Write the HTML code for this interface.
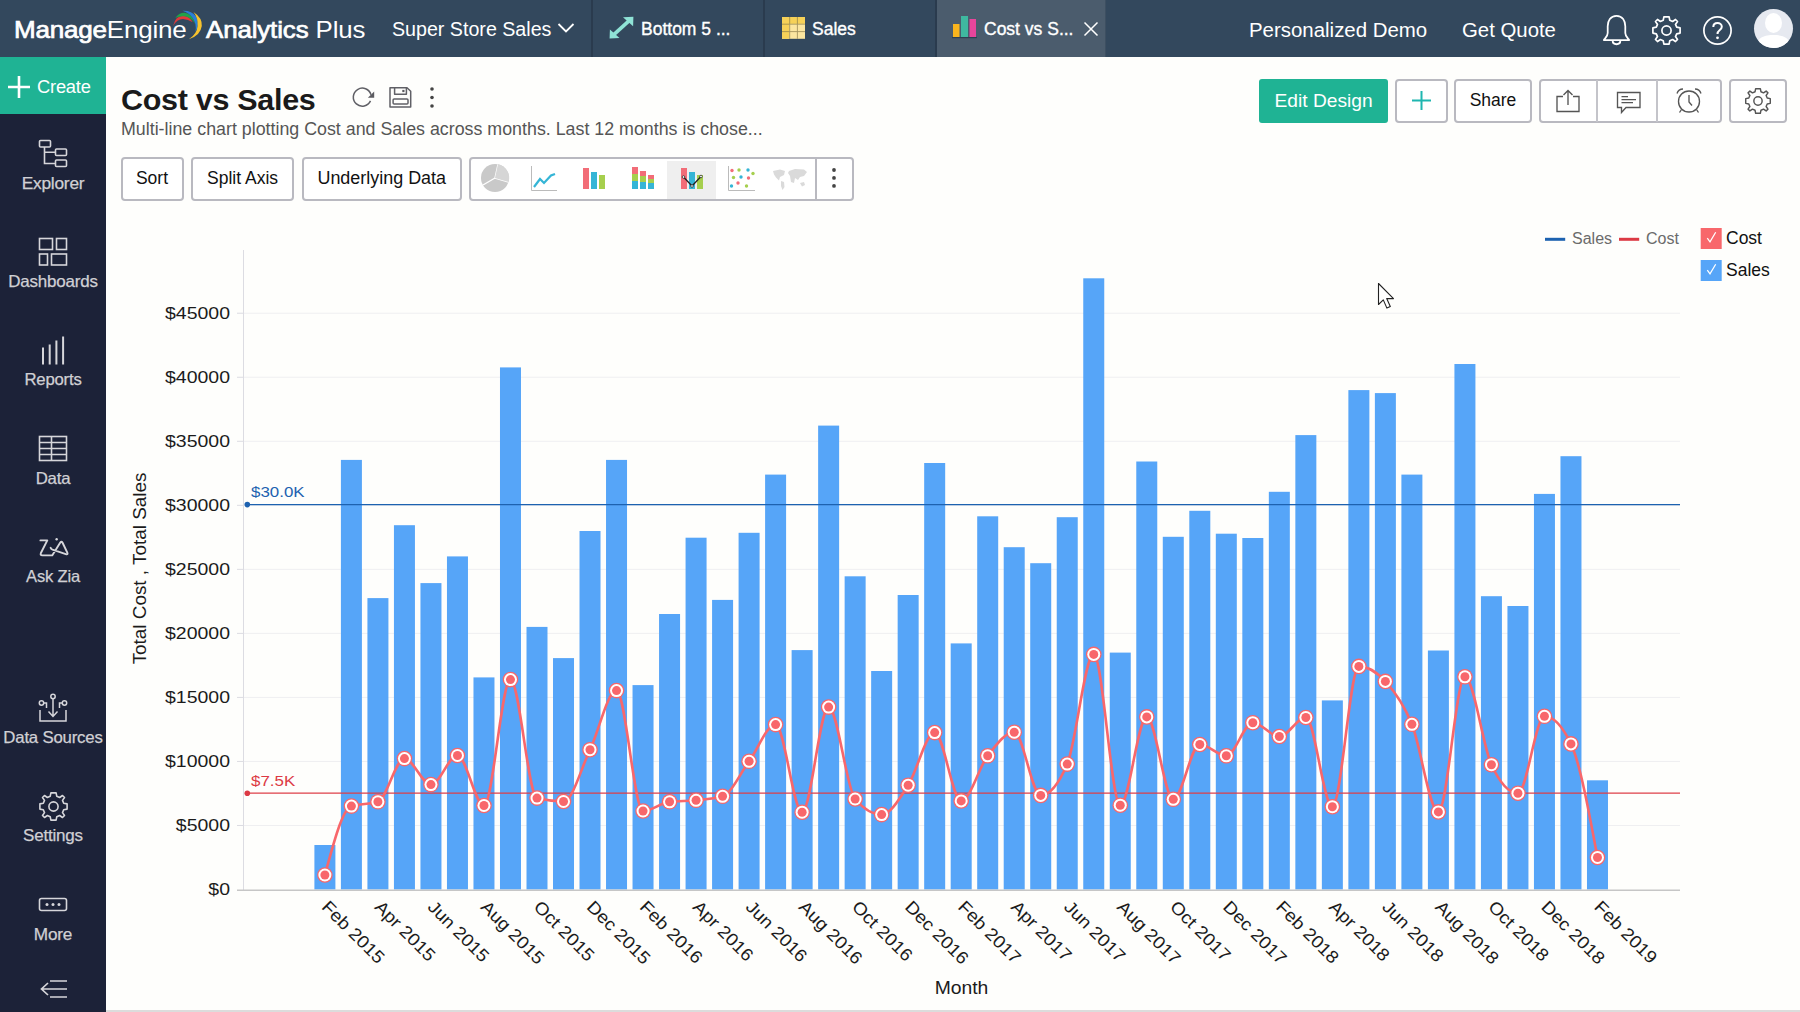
<!DOCTYPE html>
<html>
<head>
<meta charset="utf-8">
<title>Cost vs Sales - Analytics Plus</title>
<style>
*{box-sizing:border-box;margin:0;padding:0}
html,body{width:1800px;height:1012px;overflow:hidden;background:#fefefc;font-family:"Liberation Sans",sans-serif;}
body{position:relative}
.abs{position:absolute}
#topbar{position:absolute;left:0;top:0;width:1800px;height:57.300px;background:#33485d;}
#topbar .t{position:absolute;color:#fff;white-space:nowrap;}
#sidebar{position:absolute;left:0;top:57px;width:106px;height:955px;background:#1c2238;}
#create{position:absolute;left:0;top:0;width:106px;height:57px;background:#1fb394;}
.nav{position:absolute;left:0;width:106px;text-align:center;color:#d0d0d4;font-size:16.5px;white-space:nowrap;letter-spacing:-0.2px;transform:scaleX(1.035);-webkit-text-stroke:0.25px #d0d0d4}
.sep{position:absolute;top:0;width:2px;height:57px;background:#2a3b4e}
.tabtxt{font-size:17.5px;top:19.300px;-webkit-text-stroke:0.35px #fff}
.sx{transform-origin:left center}
.btn{position:absolute;border:2px solid #b9b9c0;border-radius:4px;background:#fff;color:#111;font-size:17.5px;text-align:center;white-space:nowrap}
svg text{font-family:"Liberation Sans",sans-serif}
.yl{font-size:17px;fill:#1b1b1b}
.xl{font-size:17.5px;fill:#1b1b1b}
.rl{font-size:15px}
.at{font-size:18px;fill:#1b1b1b}
.lg{font-size:16px}
.lg2{font-size:17.5px;fill:#111}
</style>
</head>
<body>
<!-- ======= TOP BAR ======= -->
<div id="topbar">
  <div class="t sx" id="logo1" style="left:13.5px;top:15.900px;font-size:24px;letter-spacing:-0.2px;transform:scaleX(1.085)"><span style="-webkit-text-stroke:0.7px #fff">Manage</span>Engine</div>
  <svg class="abs" style="left:160px;top:4px" width="60" height="44" viewBox="160 4 60 44">
    <path d="M173,26 Q175.500,15.800 183,15.800 Q189.500,16 192.800,22.300 Q188,19 183,18.900 Q177,18.800 173,26Z" fill="#e0393b"/>
    <path d="M175.300,18 Q179,12.600 184.500,12.800 Q192.500,13.500 195.200,24 Q191,16.800 184,16.200 Q179,15.900 175.300,18Z" fill="#21a24a"/>
    <path d="M182.500,10.800 Q191.500,10.300 196,16.500 Q200,23 195.500,32 Q196.800,23 192.300,17.500 Q189,13 182.500,10.800Z" fill="#2b7fd6"/>
    <path d="M193.500,12 Q202.500,18 201.800,26 Q200.500,35.500 188.800,39.300 Q197,34 197.600,26 Q198.200,18 193.500,12Z" fill="#f7c32e"/>
  </svg>
  <div class="t sx" id="logo2" style="left:206px;top:15.900px;font-size:24px;letter-spacing:-0.1px;transform:scaleX(1.077)"><span style="-webkit-text-stroke:0.7px #fff">Analytics</span> Plus</div>
  <div class="t sx" id="ws" style="left:391.500px;top:17.700px;font-size:20px;transform:scaleX(0.982)">Super Store Sales</div>
  <svg class="abs" style="left:556.500px;top:21px" width="18" height="14" viewBox="0 0 18 14"><path d="M1.5,3 L9,10.5 L16.5,3" fill="none" stroke="#fff" stroke-width="1.8"/></svg>

  <div class="sep" style="left:591px"></div>
  <div class="sep" style="left:763px"></div>
  <div class="sep" style="left:935px"></div>
  <div class="abs" style="left:937px;top:0;width:169px;height:57.300px;background:#4b5c6d"></div>
  <div class="sep" style="left:1105px;background:#3d4f61;width:1px"></div>

  <!-- tab1 -->
  <svg class="abs" style="left:608px;top:15px" width="27" height="27" viewBox="0 0 27 27">
    <path d="M5.500,19.800 L21.500,5.300" stroke="#8fe3d6" stroke-width="3.600" fill="none"/>
    <path d="M15,2.200 L25.400,1.700 L25.100,11.200 z" fill="#8fe3d6"/>
    <path d="M1.900,14.500 L1.600,23.400 L11.500,23 z" fill="#8fe3d6"/>
  </svg>
  <div class="t tabtxt" id="tab1" style="left:641px">Bottom 5 ...</div>
  <!-- tab2 -->
  <svg class="abs" style="left:781.800px;top:16.800px" width="23" height="21.800" viewBox="0 0 23 21.800">
    <rect x="0" y="0" width="23" height="21.800" fill="#fce6a0"/>
    <rect x="0" y="0" width="23" height="6.800" fill="#f6d158"/>
    <rect x="0" y="0" width="7.200" height="21.800" fill="#f6d158"/>
    <path d="M7.700,0 V21.800 M15.400,0 V21.800 M0,7.200 H23 M0,14.600 H23" stroke="#8a7a4a" stroke-width="0.900" opacity=".75"/>
  </svg>
  <div class="t tabtxt" id="tab2" style="left:812px">Sales</div>
  <!-- tab3 -->
  <svg class="abs" style="left:952px;top:15px" width="25" height="24" viewBox="0 0 25 24">
    <rect x="1" y="9" width="6.5" height="13" fill="#fab51e"/>
    <rect x="9" y="1" width="7" height="21" fill="#3fb8a0"/>
    <rect x="17.5" y="4" width="6.5" height="18" fill="#e8459b"/>
    <rect x="0" y="22" width="25" height="1.2" fill="#2d3f52"/>
  </svg>
  <div class="t tabtxt" id="tab3" style="left:984px">Cost vs S...</div>
  <svg class="abs" style="left:1083px;top:21px" width="16" height="16" viewBox="0 0 16 16"><path d="M1.5,1.5 L14.5,14.5 M14.5,1.5 L1.5,14.5" stroke="#fff" stroke-width="1.5"/></svg>

  <div class="t" id="pd" style="left:1248.500px;top:18.700px;font-size:20px;transform:scaleX(1.021);transform-origin:left center">Personalized Demo</div>
  <div class="t" id="gq" style="left:1462px;top:18.700px;font-size:20px;transform:scaleX(1.018);transform-origin:left center">Get Quote</div>

  <!-- bell -->
  <svg class="abs" style="left:1599.800px;top:12px" width="33" height="35.200" viewBox="0 0 30 32">
    <path d="M15,3.5 C9.5,3.5 7,8 7,13 V19 C7,22 5,23.5 3.5,25.5 H26.5 C25,23.5 23,22 23,19 V13 C23,8 20.5,3.5 15,3.5z" fill="none" stroke="#fff" stroke-width="1.600" stroke-linejoin="round"/>
    <path d="M11.5,26 C11.5,30.5 18.5,30.5 18.5,26" fill="none" stroke="#fff" stroke-width="1.7"/>
  </svg>
  <!-- gear -->
  <svg class="abs" style="left:1651px;top:14.700px" width="31" height="31" viewBox="-15.5 -15.5 31 31">
    <g fill="none" stroke="#fff" stroke-width="1.7" stroke-linejoin="round">
      <path id="gearp" d="M-2.6,-13.6 H2.6 L3.3,-10.2 L6.1,-9 L9,-11 L11,-9 L9,-6.1 L10.2,-3.3 L13.6,-2.6 V2.6 L10.2,3.3 L9,6.1 L11,9 L9,11 L6.1,9 L3.3,10.2 L2.6,13.6 H-2.6 L-3.3,10.2 L-6.1,9 L-9,11 L-11,9 L-9,6.1 L-10.2,3.3 L-13.6,2.6 V-2.6 L-10.2,-3.3 L-9,-6.1 L-11,-9 L-9,-11 L-6.1,-9 L-3.3,-10.2 Z"/>
      <circle r="4.6"/>
    </g>
  </svg>
  <!-- help -->
  <svg class="abs" style="left:1702px;top:14.700px" width="31" height="31" viewBox="0 0 31 31">
    <circle cx="15.5" cy="15.5" r="13.6" fill="none" stroke="#fff" stroke-width="1.7"/>
    <path d="M11.3,12 C11.3,6.6 19.8,6.8 19.8,11.8 C19.8,15.2 15.5,15 15.5,19" fill="none" stroke="#fff" stroke-width="2"/>
    <circle cx="15.5" cy="22.8" r="1.4" fill="#fff"/>
  </svg>
  <!-- avatar -->
  <svg class="abs" style="left:1753px;top:8px" width="41" height="41" viewBox="0 0 41 41">
    <defs><clipPath id="avc"><circle cx="20.5" cy="20.5" r="19.5"/></clipPath></defs>
    <circle cx="20.5" cy="20.5" r="19.5" fill="#e6e9f0"/>
    <g clip-path="url(#avc)" fill="#fff">
      <ellipse cx="20.5" cy="15" rx="8.5" ry="10"/>
      <path d="M3,41 C3,29 12,27 20.5,27 C29,27 38,29 38,41z"/>
    </g>
  </svg>
</div>

<!-- ======= SIDEBAR ======= -->
<div id="sidebar">
  <div id="create">
    <svg class="abs" style="left:7px;top:18px" width="24" height="24" viewBox="0 0 24 24"><path d="M12,1 V23 M1,12 H23" stroke="#fff" stroke-width="2.6"/></svg>
    <div class="abs" id="createtxt" style="left:36.500px;top:20px;color:#fff;font-size:17.5px;letter-spacing:-0.2px;transform:scaleX(1.045);transform-origin:left center">Create</div>
  </div>

  <!-- Explorer: icon y 140-166 abs => 83-109 rel -->
  <svg class="abs" style="left:38px;top:82px" width="32" height="30" viewBox="0 0 32 30" fill="none" stroke="#d6d6da" stroke-width="1.6">
    <rect x="1.5" y="1.5" width="11" height="6.5" rx="1"/>
    <rect x="17.5" y="10" width="11" height="6.5" rx="1"/>
    <rect x="17.5" y="21" width="11" height="6.5" rx="1"/>
    <path d="M6.5,8 V24.5 H17.5 M6.5,13.3 H17.5"/>
  </svg>
  <div class="nav" style="top:116.9px;transform:scaleX(1.047)">Explorer</div>

  <svg class="abs" style="left:38px;top:180px" width="31" height="30" viewBox="0 0 31 30" fill="none" stroke="#d6d6da" stroke-width="1.6">
    <rect x="1.5" y="1.5" width="13" height="11"/>
    <rect x="18.5" y="1.5" width="10" height="11"/>
    <rect x="1.5" y="17" width="8" height="11"/>
    <rect x="13.5" y="17" width="15" height="11"/>
  </svg>
  <div class="nav" style="top:214.9px;transform:scaleX(1.028)">Dashboards</div>

  <svg class="abs" style="left:40px;top:278px" width="26" height="30" viewBox="0 0 26 30" fill="none" stroke="#d6d6da" stroke-width="2">
    <path d="M3,12.500 V29.500 M9.700,9.500 V29.500 M16.400,5.500 V29.500 M23.100,1.500 V29.500"/>
  </svg>
  <div class="nav" style="top:312.9px;transform:scaleX(1.012)">Reports</div>

  <svg class="abs" style="left:38px;top:378px" width="30" height="28" viewBox="0 0 30 28" fill="none" stroke="#d6d6da" stroke-width="1.6">
    <rect x="1.5" y="1.5" width="27" height="24"/>
    <path d="M1.5,7.5 H28.5 M1.5,13.5 H28.5 M1.5,19.5 H28.5 M13.5,1.5 V25.5"/>
  </svg>
  <div class="nav" style="top:411.9px;transform:scaleX(1.018)">Data</div>

  <svg class="abs" style="left:36px;top:478px" width="36" height="24" viewBox="36 535 36 24" fill="none" stroke="#d6d6da" stroke-width="1.900" stroke-linecap="round" stroke-linejoin="round">
    <path d="M40.400,540.400 H47.300 L40.900,553 Q39.900,555.400 42.400,555.400 H52.200 L60.300,542.600 Q61.600,540.600 62.700,543 L67.300,552.600 Q68.300,555 65.800,554.200 L52.500,549.600 Q51,549 50.600,547.800"/>
    <circle cx="56.650" cy="539.200" r="1.200" fill="#d6d6da" stroke="none"/>
  </svg>
  <div class="nav" style="top:509.9px;transform:scaleX(1.003)">Ask Zia</div>

  <svg class="abs" style="left:37px;top:636px" width="32" height="30" viewBox="0 0 32 30" fill="none" stroke="#d6d6da" stroke-width="1.5">
    <circle cx="16" cy="3.500" r="2.2"/>
    <circle cx="4.500" cy="10" r="2.2"/>
    <circle cx="27.500" cy="10" r="2.2"/>
    <path d="M16,6 V23 M11.5,18.500 L16,23.500 L20.500,18.500"/>
    <path d="M6.800,10 H9.500 V15 M25.200,10 H22.500 V15"/>
    <path d="M3,17 V28 H29 V17"/>
  </svg>
  <div class="nav" style="top:670.9px;transform:scaleX(1.018)">Data Sources</div>

  <svg class="abs" style="left:38px;top:734px" width="31" height="31" viewBox="-15.5 -15.5 31 31">
    <g fill="none" stroke="#d6d6da" stroke-width="1.6" stroke-linejoin="round">
      <path d="M-2.6,-13.6 H2.6 L3.3,-10.2 L6.1,-9 L9,-11 L11,-9 L9,-6.1 L10.2,-3.3 L13.6,-2.6 V2.6 L10.2,3.3 L9,6.1 L11,9 L9,11 L6.1,9 L3.3,10.2 L2.6,13.6 H-2.6 L-3.3,10.2 L-6.1,9 L-9,11 L-11,9 L-9,6.1 L-10.2,3.3 L-13.6,2.6 V-2.6 L-10.2,-3.3 L-9,-6.1 L-11,-9 L-9,-11 L-6.1,-9 L-3.3,-10.2 Z"/>
      <circle r="4.600"/>
    </g>
  </svg>
  <div class="nav" style="top:768.9px;transform:scaleX(1.030)">Settings</div>

  <svg class="abs" style="left:38px;top:840px" width="30" height="16" viewBox="0 0 30 16" fill="none" stroke="#d6d6da" stroke-width="1.6">
    <rect x="1.500" y="1.500" width="27" height="12" rx="2"/>
    <g fill="#d6d6da" stroke="none"><circle cx="9" cy="7.500" r="1.500"/><circle cx="15" cy="7.500" r="1.500"/><circle cx="21" cy="7.500" r="1.500"/></g>
  </svg>
  <div class="nav" style="top:867.9px;transform:scaleX(1.040)">More</div>

  <svg class="abs" style="left:39px;top:922px" width="30" height="20" viewBox="0 0 30 20" fill="none" stroke="#d6d6da" stroke-width="1.7">
    <path d="M11,2 H28 M3,10 H28 M11,18 H28 M9,4 L2.500,10 L9,16"/>
  </svg>
</div>

<!-- ======= HEADER ======= -->
<div class="abs" id="title" style="left:121px;top:82.800px;font-size:30px;font-weight:700;color:#1a1a1a;letter-spacing:-0.3px;white-space:nowrap;transform:scaleX(1.017);transform-origin:left center">Cost vs Sales</div>
<svg class="abs" style="left:350px;top:85px" width="26" height="26" viewBox="350 85 26 26" fill="none" stroke="#606066" stroke-width="1.500">
  <path d="M371,94.800 A9,9 0 1 0 370.500,100.900"/>
  <path d="M374.200,91.600 V97.700 H367.900 Z" fill="#5b5b60" stroke="none"/>
</svg>
<svg class="abs" style="left:388px;top:85px" width="24" height="24" viewBox="0 0 24 24" fill="none" stroke="#606066" stroke-width="1.500" stroke-linejoin="round">
  <path d="M2,2.800 H19 L22.700,6.200 V22 H2 Z"/>
  <path d="M6.600,2.800 V9.200 H18.400 V2.800"/>
  <rect x="5.100" y="14.100" width="14.900" height="4.900" rx="1"/>
  <rect x="14.300" y="4.900" width="2.200" height="2.200" fill="#5b5b60" stroke="none"/>
</svg>
<svg class="abs" style="left:427px;top:85px" width="10" height="26" viewBox="0 0 10 26" fill="#444"><circle cx="5" cy="4" r="1.800"/><circle cx="5" cy="12.500" r="1.800"/><circle cx="5" cy="21" r="1.800"/></svg>
<div class="abs" id="subtitle" style="left:121px;top:119.100px;font-size:17.5px;color:#555;white-space:nowrap;transform:scaleX(1.018);transform-origin:left center">Multi-line chart plotting Cost and Sales across months. Last 12 months is chose...</div>

<!-- toolbar -->
<div class="btn" style="left:120.500px;top:157.300px;width:63px;height:44px;line-height:39px">Sort</div>
<div class="btn" style="left:190.800px;top:157.300px;width:103.500px;height:44px;line-height:39px">Split Axis</div>
<div class="btn" style="left:302.300px;top:157.300px;width:159.500px;height:44px;line-height:39px"><span style="display:inline-block;transform:scaleX(1.025)">Underlying Data</span></div>
<div class="btn" style="left:469px;top:157.300px;width:384.800px;height:44px"></div>
<div class="abs" style="left:667px;top:160.500px;width:48.500px;height:38.500px;background:#efefef"></div>
<div class="abs" style="left:814.500px;top:158.500px;width:2px;height:42px;background:#b9b9c0"></div>
<svg class="abs" style="left:829px;top:164px" width="10" height="30" viewBox="0 0 10 30" fill="#444"><circle cx="5" cy="6" r="1.900"/><circle cx="5" cy="13.900" r="1.900"/><circle cx="5" cy="21.900" r="1.900"/></svg>
<!-- chart type icons -->
<svg class="abs" style="left:470px;top:159px" width="344" height="40" viewBox="470 159 344 40">
  <!-- pie -->
  <circle cx="495" cy="178" r="14" fill="#c9c9c9"/>
  <path d="M495,178 L498,164.500 M495,178 L508.500,182 M495,178 L483,185" stroke="#fefefe" stroke-width="1.400" fill="none"/>
  <path d="M495,178 L498,164.300 A14,14 0 0 1 508.600,182 Z" fill="#d6d6d6"/>
  <!-- line -->
  <path d="M531.500,166 V190.500 H557" stroke="#bbb" stroke-width="1" fill="none"/>
  <path d="M534,187 L540,179 L544,183 L551,175.500 L555,174" stroke="#35b5d6" stroke-width="2.200" fill="none"/>
  <!-- bars -->
  <rect x="583" y="168" width="6" height="21" fill="#f26d78"/>
  <rect x="591" y="172" width="6" height="17" fill="#35b5d6"/>
  <rect x="599" y="175" width="6" height="14" fill="#a6cf4e"/>
  <!-- stacked -->
  <rect x="632" y="167" width="6" height="7" fill="#f26d78"/><rect x="632" y="174" width="6" height="7" fill="#a6cf4e"/><rect x="632" y="181" width="6" height="8" fill="#35b5d6"/>
  <rect x="640" y="171" width="6" height="5" fill="#f26d78"/><rect x="640" y="176" width="6" height="6" fill="#a6cf4e"/><rect x="640" y="182" width="6" height="7" fill="#35b5d6"/>
  <rect x="648" y="175" width="6" height="4" fill="#f26d78"/><rect x="648" y="179" width="6" height="4" fill="#a6cf4e"/><rect x="648" y="183" width="6" height="6" fill="#35b5d6"/>
  <!-- combo -->
  <rect x="681" y="168" width="6" height="21" fill="#f26d78"/>
  <rect x="689" y="172" width="6" height="17" fill="#35b5d6"/>
  <rect x="697" y="175" width="6" height="14" fill="#a6cf4e"/>
  <path d="M683.500,177 L692,186 L701,176.500" stroke="#222" stroke-width="1.300" fill="none"/>
  <circle cx="683.500" cy="177" r="1.300" fill="#fff" stroke="#222" stroke-width=".7"/><circle cx="692" cy="186" r="1.300" fill="#fff" stroke="#222" stroke-width=".7"/><circle cx="701" cy="176.500" r="1.300" fill="#fff" stroke="#222" stroke-width=".7"/>
  <!-- scatter -->
  <path d="M728.500,166 V190.500 H755" stroke="#bbb" stroke-width="1" fill="none"/>
  <g>
    <circle cx="732" cy="170.500" r="1.700" fill="#f26d78"/><circle cx="739" cy="170" r="1.700" fill="#a6cf4e"/><circle cx="748" cy="170" r="1.700" fill="#35b5d6"/>
    <circle cx="753" cy="173.500" r="1.700" fill="#a6cf4e"/><circle cx="733.500" cy="177.500" r="1.700" fill="#a6cf4e"/><circle cx="741" cy="177" r="1.700" fill="#35b5d6"/>
    <circle cx="748.500" cy="178" r="1.700" fill="#f26d78"/><circle cx="731.500" cy="186" r="1.700" fill="#35b5d6"/><circle cx="738" cy="183" r="1.700" fill="#f26d78"/><circle cx="746.500" cy="186" r="1.700" fill="#a6cf4e"/>
  </g>
  <!-- map -->
  <g fill="#dadada">
    <path d="M773,171 l7,-1.500 l5,1.500 l-1,4 l-4,2 l-1,3.500 l-3,-3 l-2,-3z"/>
    <path d="M781,181 l3,1 l0.500,5 l-2,3 l-1.500,-4z"/>
    <path d="M789,171 l6,-2 l9,0.500 l3,2.500 l-3,4 l-4,1 l-2,3 l-3,-2 l-1,5 l-3,-1 l-1,-6 l-2,-3z"/>
    <path d="M800,183 l4,-1 l1,3 l-3,1.500z"/>
  </g>
</svg>

<!-- right buttons -->
<div class="abs" id="editd" style="left:1259px;top:79px;width:129px;height:44px;background:#1fb394;border-radius:3px;color:#fff;font-size:19px;line-height:43px;text-align:center;white-space:nowrap"><span style="display:inline-block;transform:scaleX(1.01)">Edit Design</span></div>
<div class="btn" style="left:1395px;top:79px;width:53px;height:44px"></div>
<svg class="abs" style="left:1411px;top:90px" width="21" height="21" viewBox="0 0 21 21"><path d="M10.500,1 V20 M1,10.500 H20" stroke="#1fb6b0" stroke-width="2"/></svg>
<div class="btn" style="left:1454px;top:79px;width:78px;height:44px;line-height:38px">Share</div>
<div class="btn" style="left:1539px;top:79px;width:182.800px;height:44px"></div>
<div class="abs" style="left:1596px;top:80px;width:2px;height:42px;background:#c4c4ca"></div>
<div class="abs" style="left:1656px;top:80px;width:2px;height:42px;background:#c4c4ca"></div>
<div class="btn" style="left:1729px;top:79px;width:58px;height:44px"></div>
<!-- export -->
<svg class="abs" style="left:1555px;top:88px" width="26" height="26" viewBox="0 0 26 26" fill="none" stroke="#555" stroke-width="1.350">
  <path d="M8,8.500 H2 V23.500 H24 V8.500 H18"/>
  <path d="M13,17 V2.500 M8.500,7 L13,2.500 L17.500,7"/>
</svg>
<!-- comment -->
<svg class="abs" style="left:1615.500px;top:91px" width="26" height="24" viewBox="0 0 26 24" fill="none" stroke="#555" stroke-width="1.350">
  <path d="M1.500,1.500 H24 V16.500 H10 L5.500,21.500 V16.500 H1.500 Z"/>
  <path d="M5.500,5.600 H12 M5.500,8.600 H20 M5.500,11.600 H17"/>
</svg>
<!-- alarm -->
<svg class="abs" style="left:1675px;top:87px" width="28" height="28" viewBox="0 0 28 28" fill="none" stroke="#555" stroke-width="1.350">
  <circle cx="14" cy="14.500" r="10.500"/>
  <path d="M14,8 V15 L17,18.500"/>
  <path d="M2,6.500 C3,3.500 5.500,2 8,2 M26,6.500 C25,3.500 22.500,2 20,2"/>
  <path d="M6.500,22.500 L4.500,25.500 M21.500,22.500 L23.500,25.500"/>
</svg>
<!-- gear -->
<svg class="abs" style="left:1744px;top:87px" width="28" height="28" viewBox="-15.500 -15.500 31 31">
  <g fill="none" stroke="#555" stroke-width="1.600" stroke-linejoin="round">
    <path d="M-2.600,-13.600 H2.600 L3.300,-10.200 L6.100,-9 L9,-11 L11,-9 L9,-6.100 L10.200,-3.300 L13.600,-2.600 V2.600 L10.200,3.300 L9,6.100 L11,9 L9,11 L6.100,9 L3.300,10.200 L2.600,13.600 H-2.600 L-3.300,10.200 L-6.100,9 L-9,11 L-11,9 L-9,6.100 L-10.200,3.300 L-13.600,2.600 V-2.600 L-10.200,-3.300 L-9,-6.100 L-11,-9 L-9,-11 L-6.100,-9 L-3.300,-10.200 Z"/>
    <circle r="4.600"/>
  </g>
</svg>

<svg class="chart" width="1694" height="812" viewBox="106 200 1694 812" style="position:absolute;left:106px;top:200px">
<line x1="243" x2="1680" y1="825.47" y2="825.47" stroke="#efeff1" stroke-width="1"/>
<line x1="237" x2="243" y1="825.47" y2="825.47" stroke="#dcdce2" stroke-width="1"/>
<line x1="243" x2="1680" y1="761.44" y2="761.44" stroke="#efeff1" stroke-width="1"/>
<line x1="237" x2="243" y1="761.44" y2="761.44" stroke="#dcdce2" stroke-width="1"/>
<line x1="243" x2="1680" y1="697.41" y2="697.41" stroke="#efeff1" stroke-width="1"/>
<line x1="237" x2="243" y1="697.41" y2="697.41" stroke="#dcdce2" stroke-width="1"/>
<line x1="243" x2="1680" y1="633.38" y2="633.38" stroke="#efeff1" stroke-width="1"/>
<line x1="237" x2="243" y1="633.38" y2="633.38" stroke="#dcdce2" stroke-width="1"/>
<line x1="243" x2="1680" y1="569.35" y2="569.35" stroke="#efeff1" stroke-width="1"/>
<line x1="237" x2="243" y1="569.35" y2="569.35" stroke="#dcdce2" stroke-width="1"/>
<line x1="243" x2="1680" y1="505.32" y2="505.32" stroke="#efeff1" stroke-width="1"/>
<line x1="237" x2="243" y1="505.32" y2="505.32" stroke="#dcdce2" stroke-width="1"/>
<line x1="243" x2="1680" y1="441.29" y2="441.29" stroke="#efeff1" stroke-width="1"/>
<line x1="237" x2="243" y1="441.29" y2="441.29" stroke="#dcdce2" stroke-width="1"/>
<line x1="243" x2="1680" y1="377.26" y2="377.26" stroke="#efeff1" stroke-width="1"/>
<line x1="237" x2="243" y1="377.26" y2="377.26" stroke="#dcdce2" stroke-width="1"/>
<line x1="243" x2="1680" y1="313.23" y2="313.23" stroke="#efeff1" stroke-width="1"/>
<line x1="237" x2="243" y1="313.23" y2="313.23" stroke="#dcdce2" stroke-width="1"/>
<line x1="243.5" x2="243.5" y1="250" y2="890" stroke="#dcdce2" stroke-width="1"/>
<rect x="314.40" y="845.00" width="21.00" height="44.50" fill="#56a5f8"/>
<rect x="340.91" y="459.90" width="21.00" height="429.60" fill="#56a5f8"/>
<rect x="367.42" y="598.10" width="21.00" height="291.40" fill="#56a5f8"/>
<rect x="393.94" y="525.20" width="21.00" height="364.30" fill="#56a5f8"/>
<rect x="420.45" y="583.10" width="21.00" height="306.40" fill="#56a5f8"/>
<rect x="446.96" y="556.40" width="21.00" height="333.10" fill="#56a5f8"/>
<rect x="473.47" y="677.40" width="21.00" height="212.10" fill="#56a5f8"/>
<rect x="499.98" y="367.40" width="21.00" height="522.10" fill="#56a5f8"/>
<rect x="526.50" y="626.90" width="21.00" height="262.60" fill="#56a5f8"/>
<rect x="553.01" y="658.10" width="21.00" height="231.40" fill="#56a5f8"/>
<rect x="579.52" y="531.00" width="21.00" height="358.50" fill="#56a5f8"/>
<rect x="606.03" y="459.90" width="21.00" height="429.60" fill="#56a5f8"/>
<rect x="632.54" y="685.10" width="21.00" height="204.40" fill="#56a5f8"/>
<rect x="659.06" y="614.00" width="21.00" height="275.50" fill="#56a5f8"/>
<rect x="685.57" y="537.70" width="21.00" height="351.80" fill="#56a5f8"/>
<rect x="712.08" y="599.90" width="21.00" height="289.60" fill="#56a5f8"/>
<rect x="738.59" y="532.80" width="21.00" height="356.70" fill="#56a5f8"/>
<rect x="765.10" y="474.60" width="21.00" height="414.90" fill="#56a5f8"/>
<rect x="791.62" y="650.10" width="21.00" height="239.40" fill="#56a5f8"/>
<rect x="818.13" y="425.60" width="21.00" height="463.90" fill="#56a5f8"/>
<rect x="844.64" y="576.30" width="21.00" height="313.20" fill="#56a5f8"/>
<rect x="871.15" y="671.00" width="21.00" height="218.50" fill="#56a5f8"/>
<rect x="897.66" y="595.00" width="21.00" height="294.50" fill="#56a5f8"/>
<rect x="924.18" y="463.00" width="21.00" height="426.50" fill="#56a5f8"/>
<rect x="950.69" y="643.40" width="21.00" height="246.10" fill="#56a5f8"/>
<rect x="977.20" y="516.30" width="21.00" height="373.20" fill="#56a5f8"/>
<rect x="1003.71" y="547.20" width="21.00" height="342.30" fill="#56a5f8"/>
<rect x="1030.22" y="563.20" width="21.00" height="326.30" fill="#56a5f8"/>
<rect x="1056.74" y="517.20" width="21.00" height="372.30" fill="#56a5f8"/>
<rect x="1083.25" y="278.30" width="21.00" height="611.20" fill="#56a5f8"/>
<rect x="1109.76" y="652.60" width="21.00" height="236.90" fill="#56a5f8"/>
<rect x="1136.27" y="461.50" width="21.00" height="428.00" fill="#56a5f8"/>
<rect x="1162.78" y="536.80" width="21.00" height="352.70" fill="#56a5f8"/>
<rect x="1189.30" y="510.80" width="21.00" height="378.70" fill="#56a5f8"/>
<rect x="1215.81" y="533.70" width="21.00" height="355.80" fill="#56a5f8"/>
<rect x="1242.32" y="538.00" width="21.00" height="351.50" fill="#56a5f8"/>
<rect x="1268.83" y="491.80" width="21.00" height="397.70" fill="#56a5f8"/>
<rect x="1295.34" y="435.10" width="21.00" height="454.40" fill="#56a5f8"/>
<rect x="1321.86" y="700.40" width="21.00" height="189.10" fill="#56a5f8"/>
<rect x="1348.37" y="390.10" width="21.00" height="499.40" fill="#56a5f8"/>
<rect x="1374.88" y="393.10" width="21.00" height="496.40" fill="#56a5f8"/>
<rect x="1401.39" y="474.60" width="21.00" height="414.90" fill="#56a5f8"/>
<rect x="1427.90" y="650.50" width="21.00" height="239.00" fill="#56a5f8"/>
<rect x="1454.42" y="364.00" width="21.00" height="525.50" fill="#56a5f8"/>
<rect x="1480.93" y="596.20" width="21.00" height="293.30" fill="#56a5f8"/>
<rect x="1507.44" y="606.00" width="21.00" height="283.50" fill="#56a5f8"/>
<rect x="1533.95" y="493.90" width="21.00" height="395.60" fill="#56a5f8"/>
<rect x="1560.46" y="456.20" width="21.00" height="433.30" fill="#56a5f8"/>
<rect x="1586.98" y="780.30" width="21.00" height="109.20" fill="#56a5f8"/>
<line x1="237" x2="1680" y1="890.3" y2="890.3" stroke="#c6c6c6" stroke-width="1.5"/>
<text transform="translate(230,895.40) scale(1.146,1)" x="0" y="0" text-anchor="end" class="yl">$0</text>
<text transform="translate(230,831.37) scale(1.146,1)" x="0" y="0" text-anchor="end" class="yl">$5000</text>
<text transform="translate(230,767.34) scale(1.146,1)" x="0" y="0" text-anchor="end" class="yl">$10000</text>
<text transform="translate(230,703.31) scale(1.146,1)" x="0" y="0" text-anchor="end" class="yl">$15000</text>
<text transform="translate(230,639.28) scale(1.146,1)" x="0" y="0" text-anchor="end" class="yl">$20000</text>
<text transform="translate(230,575.25) scale(1.146,1)" x="0" y="0" text-anchor="end" class="yl">$25000</text>
<text transform="translate(230,511.22) scale(1.146,1)" x="0" y="0" text-anchor="end" class="yl">$30000</text>
<text transform="translate(230,447.19) scale(1.146,1)" x="0" y="0" text-anchor="end" class="yl">$35000</text>
<text transform="translate(230,383.16) scale(1.146,1)" x="0" y="0" text-anchor="end" class="yl">$40000</text>
<text transform="translate(230,319.13) scale(1.146,1)" x="0" y="0" text-anchor="end" class="yl">$45000</text>
<line x1="247" x2="1680" y1="504.6" y2="504.6" stroke="#1d62b0" stroke-width="1.4"/>
<circle cx="247.3" cy="504.6" r="2.8" fill="#1d62b0"/>
<text transform="translate(251,497) scale(1.128,1)" class="rl" fill="#1d62b0">$30.0K</text>
<line x1="247" x2="1680" y1="793.1" y2="793.1" stroke="#de3f48" stroke-width="1.3"/>
<circle cx="247.3" cy="793.2" r="2.8" fill="#dc3a44"/>
<text transform="translate(251,786) scale(1.128,1)" class="rl" fill="#dc3a44">$7.5K</text>
<path d="M324.90,875.00C333.74,841.98 342.57,808.97 351.41,806.10C360.25,803.23 369.09,804.67 377.92,801.80C386.76,798.93 395.60,758.60 404.44,758.60C413.27,758.60 422.11,784.60 430.95,784.60C439.79,784.60 448.62,755.50 457.46,755.50C466.30,755.50 475.13,805.50 483.97,805.50C492.81,805.50 501.65,679.60 510.48,679.60C519.32,679.60 528.16,795.83 537.00,798.10C545.83,800.37 554.67,801.50 563.51,801.50C572.35,801.50 581.18,768.18 590.02,749.70C598.86,731.22 607.69,690.60 616.53,690.60C625.37,690.60 634.21,811.00 643.04,811.00C651.88,811.00 660.72,802.80 669.56,801.80C678.39,800.80 687.23,801.22 696.07,800.30C704.91,799.38 713.74,798.97 722.58,796.30C731.42,793.63 740.25,773.25 749.09,761.30C757.93,749.35 766.77,724.60 775.60,724.60C784.44,724.60 793.28,812.20 802.12,812.20C810.95,812.20 819.79,707.10 828.63,707.10C837.47,707.10 846.30,788.60 855.14,799.00C863.98,809.40 872.81,814.60 881.65,814.60C890.49,814.60 899.33,798.87 908.16,785.20C917.00,771.53 925.84,732.60 934.68,732.60C943.51,732.60 952.35,800.90 961.19,800.90C970.03,800.90 978.86,767.25 987.70,755.80C996.54,744.35 1005.37,732.20 1014.21,732.20C1023.05,732.20 1031.89,795.40 1040.72,795.40C1049.56,795.40 1058.40,784.97 1067.24,764.10C1076.07,743.23 1084.91,654.40 1093.75,654.40C1102.59,654.40 1111.42,805.20 1120.26,805.20C1129.10,805.20 1137.93,716.90 1146.77,716.90C1155.61,716.90 1164.45,799.30 1173.28,799.30C1182.12,799.30 1190.96,744.50 1199.80,744.50C1208.63,744.50 1217.47,755.80 1226.31,755.80C1235.15,755.80 1243.98,722.70 1252.82,722.70C1261.66,722.70 1270.49,736.50 1279.33,736.50C1288.17,736.50 1297.01,717.50 1305.84,717.50C1314.68,717.50 1323.52,806.70 1332.36,806.70C1341.19,806.70 1350.03,666.40 1358.87,666.40C1367.71,666.40 1376.54,671.75 1385.38,681.40C1394.22,691.05 1403.05,702.55 1411.89,724.30C1420.73,746.05 1429.57,811.90 1438.40,811.90C1447.24,811.90 1456.08,676.80 1464.92,676.80C1473.75,676.80 1482.59,745.70 1491.43,764.70C1500.27,783.70 1509.10,793.20 1517.94,793.20C1526.78,793.20 1535.61,716.30 1544.45,716.30C1553.29,716.30 1562.13,725.50 1570.96,743.90C1579.80,762.30 1588.64,809.90 1597.48,857.50" fill="none" stroke="#f8676b" stroke-width="2.6" stroke-linejoin="round" stroke-linecap="round"/>
<circle cx="324.90" cy="875.00" r="7.8" fill="#f8676b"/>
<circle cx="324.90" cy="875.00" r="6.5" fill="#fff"/>
<circle cx="324.90" cy="875.00" r="4.5" fill="#f8676b"/>
<circle cx="351.41" cy="806.10" r="7.8" fill="#f8676b"/>
<circle cx="351.41" cy="806.10" r="6.5" fill="#fff"/>
<circle cx="351.41" cy="806.10" r="4.5" fill="#f8676b"/>
<circle cx="377.92" cy="801.80" r="7.8" fill="#f8676b"/>
<circle cx="377.92" cy="801.80" r="6.5" fill="#fff"/>
<circle cx="377.92" cy="801.80" r="4.5" fill="#f8676b"/>
<circle cx="404.44" cy="758.60" r="7.8" fill="#f8676b"/>
<circle cx="404.44" cy="758.60" r="6.5" fill="#fff"/>
<circle cx="404.44" cy="758.60" r="4.5" fill="#f8676b"/>
<circle cx="430.95" cy="784.60" r="7.8" fill="#f8676b"/>
<circle cx="430.95" cy="784.60" r="6.5" fill="#fff"/>
<circle cx="430.95" cy="784.60" r="4.5" fill="#f8676b"/>
<circle cx="457.46" cy="755.50" r="7.8" fill="#f8676b"/>
<circle cx="457.46" cy="755.50" r="6.5" fill="#fff"/>
<circle cx="457.46" cy="755.50" r="4.5" fill="#f8676b"/>
<circle cx="483.97" cy="805.50" r="7.8" fill="#f8676b"/>
<circle cx="483.97" cy="805.50" r="6.5" fill="#fff"/>
<circle cx="483.97" cy="805.50" r="4.5" fill="#f8676b"/>
<circle cx="510.48" cy="679.60" r="7.8" fill="#f8676b"/>
<circle cx="510.48" cy="679.60" r="6.5" fill="#fff"/>
<circle cx="510.48" cy="679.60" r="4.5" fill="#f8676b"/>
<circle cx="537.00" cy="798.10" r="7.8" fill="#f8676b"/>
<circle cx="537.00" cy="798.10" r="6.5" fill="#fff"/>
<circle cx="537.00" cy="798.10" r="4.5" fill="#f8676b"/>
<circle cx="563.51" cy="801.50" r="7.8" fill="#f8676b"/>
<circle cx="563.51" cy="801.50" r="6.5" fill="#fff"/>
<circle cx="563.51" cy="801.50" r="4.5" fill="#f8676b"/>
<circle cx="590.02" cy="749.70" r="7.8" fill="#f8676b"/>
<circle cx="590.02" cy="749.70" r="6.5" fill="#fff"/>
<circle cx="590.02" cy="749.70" r="4.5" fill="#f8676b"/>
<circle cx="616.53" cy="690.60" r="7.8" fill="#f8676b"/>
<circle cx="616.53" cy="690.60" r="6.5" fill="#fff"/>
<circle cx="616.53" cy="690.60" r="4.5" fill="#f8676b"/>
<circle cx="643.04" cy="811.00" r="7.8" fill="#f8676b"/>
<circle cx="643.04" cy="811.00" r="6.5" fill="#fff"/>
<circle cx="643.04" cy="811.00" r="4.5" fill="#f8676b"/>
<circle cx="669.56" cy="801.80" r="7.8" fill="#f8676b"/>
<circle cx="669.56" cy="801.80" r="6.5" fill="#fff"/>
<circle cx="669.56" cy="801.80" r="4.5" fill="#f8676b"/>
<circle cx="696.07" cy="800.30" r="7.8" fill="#f8676b"/>
<circle cx="696.07" cy="800.30" r="6.5" fill="#fff"/>
<circle cx="696.07" cy="800.30" r="4.5" fill="#f8676b"/>
<circle cx="722.58" cy="796.30" r="7.8" fill="#f8676b"/>
<circle cx="722.58" cy="796.30" r="6.5" fill="#fff"/>
<circle cx="722.58" cy="796.30" r="4.5" fill="#f8676b"/>
<circle cx="749.09" cy="761.30" r="7.8" fill="#f8676b"/>
<circle cx="749.09" cy="761.30" r="6.5" fill="#fff"/>
<circle cx="749.09" cy="761.30" r="4.5" fill="#f8676b"/>
<circle cx="775.60" cy="724.60" r="7.8" fill="#f8676b"/>
<circle cx="775.60" cy="724.60" r="6.5" fill="#fff"/>
<circle cx="775.60" cy="724.60" r="4.5" fill="#f8676b"/>
<circle cx="802.12" cy="812.20" r="7.8" fill="#f8676b"/>
<circle cx="802.12" cy="812.20" r="6.5" fill="#fff"/>
<circle cx="802.12" cy="812.20" r="4.5" fill="#f8676b"/>
<circle cx="828.63" cy="707.10" r="7.8" fill="#f8676b"/>
<circle cx="828.63" cy="707.10" r="6.5" fill="#fff"/>
<circle cx="828.63" cy="707.10" r="4.5" fill="#f8676b"/>
<circle cx="855.14" cy="799.00" r="7.8" fill="#f8676b"/>
<circle cx="855.14" cy="799.00" r="6.5" fill="#fff"/>
<circle cx="855.14" cy="799.00" r="4.5" fill="#f8676b"/>
<circle cx="881.65" cy="814.60" r="7.8" fill="#f8676b"/>
<circle cx="881.65" cy="814.60" r="6.5" fill="#fff"/>
<circle cx="881.65" cy="814.60" r="4.5" fill="#f8676b"/>
<circle cx="908.16" cy="785.20" r="7.8" fill="#f8676b"/>
<circle cx="908.16" cy="785.20" r="6.5" fill="#fff"/>
<circle cx="908.16" cy="785.20" r="4.5" fill="#f8676b"/>
<circle cx="934.68" cy="732.60" r="7.8" fill="#f8676b"/>
<circle cx="934.68" cy="732.60" r="6.5" fill="#fff"/>
<circle cx="934.68" cy="732.60" r="4.5" fill="#f8676b"/>
<circle cx="961.19" cy="800.90" r="7.8" fill="#f8676b"/>
<circle cx="961.19" cy="800.90" r="6.5" fill="#fff"/>
<circle cx="961.19" cy="800.90" r="4.5" fill="#f8676b"/>
<circle cx="987.70" cy="755.80" r="7.8" fill="#f8676b"/>
<circle cx="987.70" cy="755.80" r="6.5" fill="#fff"/>
<circle cx="987.70" cy="755.80" r="4.5" fill="#f8676b"/>
<circle cx="1014.21" cy="732.20" r="7.8" fill="#f8676b"/>
<circle cx="1014.21" cy="732.20" r="6.5" fill="#fff"/>
<circle cx="1014.21" cy="732.20" r="4.5" fill="#f8676b"/>
<circle cx="1040.72" cy="795.40" r="7.8" fill="#f8676b"/>
<circle cx="1040.72" cy="795.40" r="6.5" fill="#fff"/>
<circle cx="1040.72" cy="795.40" r="4.5" fill="#f8676b"/>
<circle cx="1067.24" cy="764.10" r="7.8" fill="#f8676b"/>
<circle cx="1067.24" cy="764.10" r="6.5" fill="#fff"/>
<circle cx="1067.24" cy="764.10" r="4.5" fill="#f8676b"/>
<circle cx="1093.75" cy="654.40" r="7.8" fill="#f8676b"/>
<circle cx="1093.75" cy="654.40" r="6.5" fill="#fff"/>
<circle cx="1093.75" cy="654.40" r="4.5" fill="#f8676b"/>
<circle cx="1120.26" cy="805.20" r="7.8" fill="#f8676b"/>
<circle cx="1120.26" cy="805.20" r="6.5" fill="#fff"/>
<circle cx="1120.26" cy="805.20" r="4.5" fill="#f8676b"/>
<circle cx="1146.77" cy="716.90" r="7.8" fill="#f8676b"/>
<circle cx="1146.77" cy="716.90" r="6.5" fill="#fff"/>
<circle cx="1146.77" cy="716.90" r="4.5" fill="#f8676b"/>
<circle cx="1173.28" cy="799.30" r="7.8" fill="#f8676b"/>
<circle cx="1173.28" cy="799.30" r="6.5" fill="#fff"/>
<circle cx="1173.28" cy="799.30" r="4.5" fill="#f8676b"/>
<circle cx="1199.80" cy="744.50" r="7.8" fill="#f8676b"/>
<circle cx="1199.80" cy="744.50" r="6.5" fill="#fff"/>
<circle cx="1199.80" cy="744.50" r="4.5" fill="#f8676b"/>
<circle cx="1226.31" cy="755.80" r="7.8" fill="#f8676b"/>
<circle cx="1226.31" cy="755.80" r="6.5" fill="#fff"/>
<circle cx="1226.31" cy="755.80" r="4.5" fill="#f8676b"/>
<circle cx="1252.82" cy="722.70" r="7.8" fill="#f8676b"/>
<circle cx="1252.82" cy="722.70" r="6.5" fill="#fff"/>
<circle cx="1252.82" cy="722.70" r="4.5" fill="#f8676b"/>
<circle cx="1279.33" cy="736.50" r="7.8" fill="#f8676b"/>
<circle cx="1279.33" cy="736.50" r="6.5" fill="#fff"/>
<circle cx="1279.33" cy="736.50" r="4.5" fill="#f8676b"/>
<circle cx="1305.84" cy="717.50" r="7.8" fill="#f8676b"/>
<circle cx="1305.84" cy="717.50" r="6.5" fill="#fff"/>
<circle cx="1305.84" cy="717.50" r="4.5" fill="#f8676b"/>
<circle cx="1332.36" cy="806.70" r="7.8" fill="#f8676b"/>
<circle cx="1332.36" cy="806.70" r="6.5" fill="#fff"/>
<circle cx="1332.36" cy="806.70" r="4.5" fill="#f8676b"/>
<circle cx="1358.87" cy="666.40" r="7.8" fill="#f8676b"/>
<circle cx="1358.87" cy="666.40" r="6.5" fill="#fff"/>
<circle cx="1358.87" cy="666.40" r="4.5" fill="#f8676b"/>
<circle cx="1385.38" cy="681.40" r="7.8" fill="#f8676b"/>
<circle cx="1385.38" cy="681.40" r="6.5" fill="#fff"/>
<circle cx="1385.38" cy="681.40" r="4.5" fill="#f8676b"/>
<circle cx="1411.89" cy="724.30" r="7.8" fill="#f8676b"/>
<circle cx="1411.89" cy="724.30" r="6.5" fill="#fff"/>
<circle cx="1411.89" cy="724.30" r="4.5" fill="#f8676b"/>
<circle cx="1438.40" cy="811.90" r="7.8" fill="#f8676b"/>
<circle cx="1438.40" cy="811.90" r="6.5" fill="#fff"/>
<circle cx="1438.40" cy="811.90" r="4.5" fill="#f8676b"/>
<circle cx="1464.92" cy="676.80" r="7.8" fill="#f8676b"/>
<circle cx="1464.92" cy="676.80" r="6.5" fill="#fff"/>
<circle cx="1464.92" cy="676.80" r="4.5" fill="#f8676b"/>
<circle cx="1491.43" cy="764.70" r="7.8" fill="#f8676b"/>
<circle cx="1491.43" cy="764.70" r="6.5" fill="#fff"/>
<circle cx="1491.43" cy="764.70" r="4.5" fill="#f8676b"/>
<circle cx="1517.94" cy="793.20" r="7.8" fill="#f8676b"/>
<circle cx="1517.94" cy="793.20" r="6.5" fill="#fff"/>
<circle cx="1517.94" cy="793.20" r="4.5" fill="#f8676b"/>
<circle cx="1544.45" cy="716.30" r="7.8" fill="#f8676b"/>
<circle cx="1544.45" cy="716.30" r="6.5" fill="#fff"/>
<circle cx="1544.45" cy="716.30" r="4.5" fill="#f8676b"/>
<circle cx="1570.96" cy="743.90" r="7.8" fill="#f8676b"/>
<circle cx="1570.96" cy="743.90" r="6.5" fill="#fff"/>
<circle cx="1570.96" cy="743.90" r="4.5" fill="#f8676b"/>
<circle cx="1597.48" cy="857.50" r="7.8" fill="#f8676b"/>
<circle cx="1597.48" cy="857.50" r="6.5" fill="#fff"/>
<circle cx="1597.48" cy="857.50" r="4.5" fill="#f8676b"/>
<text class="xl" transform="translate(320.65,908.00) rotate(45) scale(1.085,1)" x="0" y="0">Feb 2015</text>
<text class="xl" transform="translate(373.67,908.00) rotate(45) scale(1.085,1)" x="0" y="0">Apr 2015</text>
<text class="xl" transform="translate(426.70,908.00) rotate(45) scale(1.085,1)" x="0" y="0">Jun 2015</text>
<text class="xl" transform="translate(479.72,908.00) rotate(45) scale(1.085,1)" x="0" y="0">Aug 2015</text>
<text class="xl" transform="translate(532.75,908.00) rotate(45) scale(1.085,1)" x="0" y="0">Oct 2015</text>
<text class="xl" transform="translate(585.77,908.00) rotate(45) scale(1.085,1)" x="0" y="0">Dec 2015</text>
<text class="xl" transform="translate(638.79,908.00) rotate(45) scale(1.085,1)" x="0" y="0">Feb 2016</text>
<text class="xl" transform="translate(691.82,908.00) rotate(45) scale(1.085,1)" x="0" y="0">Apr 2016</text>
<text class="xl" transform="translate(744.84,908.00) rotate(45) scale(1.085,1)" x="0" y="0">Jun 2016</text>
<text class="xl" transform="translate(797.87,908.00) rotate(45) scale(1.085,1)" x="0" y="0">Aug 2016</text>
<text class="xl" transform="translate(850.89,908.00) rotate(45) scale(1.085,1)" x="0" y="0">Oct 2016</text>
<text class="xl" transform="translate(903.91,908.00) rotate(45) scale(1.085,1)" x="0" y="0">Dec 2016</text>
<text class="xl" transform="translate(956.94,908.00) rotate(45) scale(1.085,1)" x="0" y="0">Feb 2017</text>
<text class="xl" transform="translate(1009.96,908.00) rotate(45) scale(1.085,1)" x="0" y="0">Apr 2017</text>
<text class="xl" transform="translate(1062.99,908.00) rotate(45) scale(1.085,1)" x="0" y="0">Jun 2017</text>
<text class="xl" transform="translate(1116.01,908.00) rotate(45) scale(1.085,1)" x="0" y="0">Aug 2017</text>
<text class="xl" transform="translate(1169.03,908.00) rotate(45) scale(1.085,1)" x="0" y="0">Oct 2017</text>
<text class="xl" transform="translate(1222.06,908.00) rotate(45) scale(1.085,1)" x="0" y="0">Dec 2017</text>
<text class="xl" transform="translate(1275.08,908.00) rotate(45) scale(1.085,1)" x="0" y="0">Feb 2018</text>
<text class="xl" transform="translate(1328.11,908.00) rotate(45) scale(1.085,1)" x="0" y="0">Apr 2018</text>
<text class="xl" transform="translate(1381.13,908.00) rotate(45) scale(1.085,1)" x="0" y="0">Jun 2018</text>
<text class="xl" transform="translate(1434.15,908.00) rotate(45) scale(1.085,1)" x="0" y="0">Aug 2018</text>
<text class="xl" transform="translate(1487.18,908.00) rotate(45) scale(1.085,1)" x="0" y="0">Oct 2018</text>
<text class="xl" transform="translate(1540.20,908.00) rotate(45) scale(1.085,1)" x="0" y="0">Dec 2018</text>
<text class="xl" transform="translate(1593.23,908.00) rotate(45) scale(1.085,1)" x="0" y="0">Feb 2019</text>
<text class="at" transform="translate(961.500,993.800) scale(1.075,1)" text-anchor="middle">Month</text>
<text class="at" transform="translate(145.500,568.500) rotate(-90) scale(1.05,1)" text-anchor="middle">Total Cost , Total Sales</text>
<line x1="1545" x2="1565.200" y1="239.300" y2="239.300" stroke="#1d62b0" stroke-width="3"/>
<text class="lg" x="1572" y="244" fill="#6b6b6b">Sales</text>
<line x1="1619" x2="1639.200" y1="239.300" y2="239.300" stroke="#dc3a44" stroke-width="3"/>
<text class="lg" x="1646" y="244" fill="#6b6b6b">Cost</text>
<rect x="1700.700" y="228" width="21" height="21" fill="#f8676b"/>
<path d="M1707.300,238.200 L1710,241.900 L1715.700,232.300" fill="none" stroke="#fff" stroke-width="1.250"/>
<text class="lg2" x="1726" y="244">Cost</text>
<rect x="1700.700" y="260" width="21" height="21" fill="#56a5f8"/>
<path d="M1707.300,270.200 L1710,273.900 L1715.700,264.300" fill="none" stroke="#fff" stroke-width="1.250"/>
<text class="lg2" x="1726" y="276">Sales</text>
<path d="M1378.5,283.5 l0,21 l4.8,-4.6 l3.6,8.2 l3.4,-1.5 l-3.6,-8 l6.8,0 z" fill="#fff" stroke="#222" stroke-width="1.1" stroke-linejoin="round"/>
</svg>

<div class="abs" style="left:106px;top:1009.500px;width:1694px;height:3px;background:#dcdcdc"></div>
</body>
</html>
